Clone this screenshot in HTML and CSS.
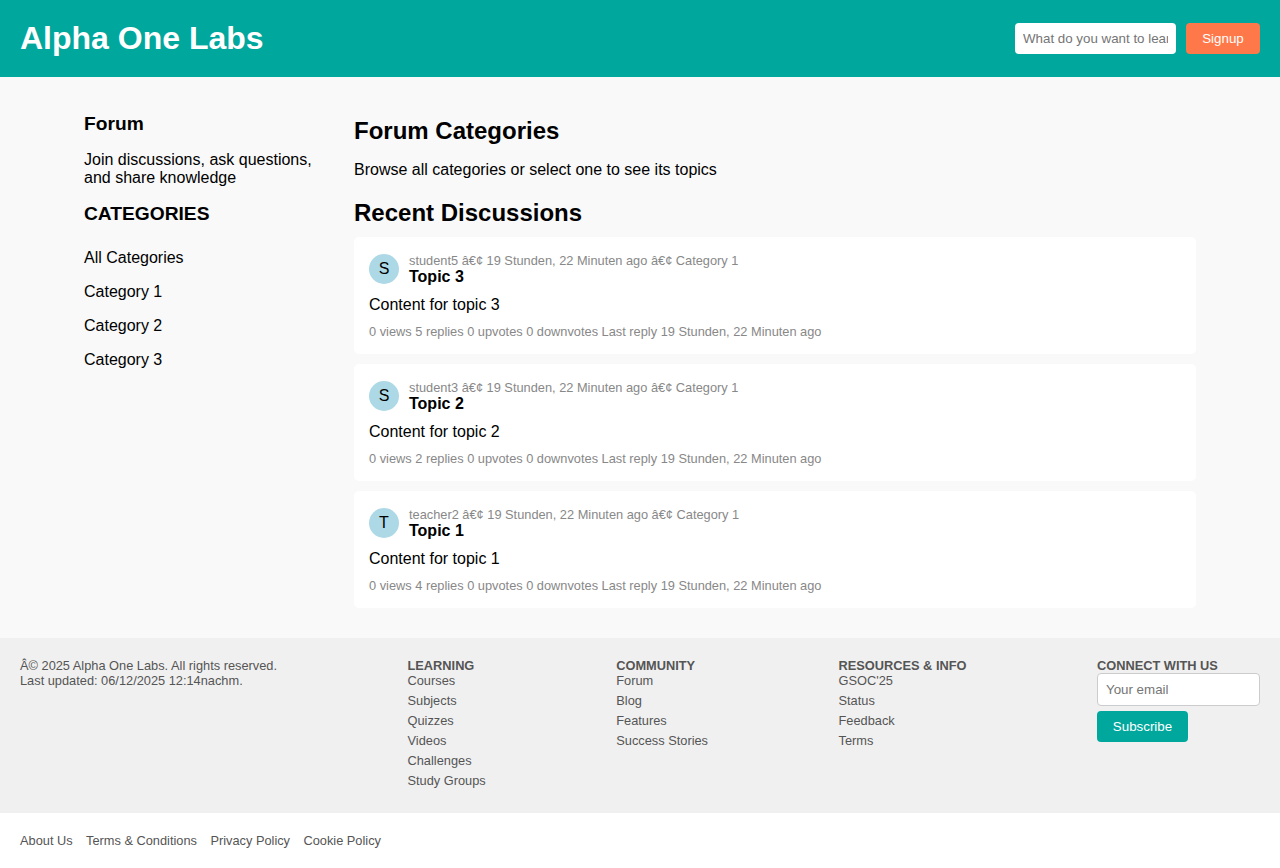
FILE: index.html
```html
<!DOCTYPE html>
<html lang="en">
<head>
<meta charset="utf-8">
<title>Alpha One Labs</title>
<link rel="stylesheet" href="styles.css">
</head>
<body>
<header class="header">
  <h1 class="brand">Alpha One Labs</h1>
  <div class="actions">
    <input class="search" type="text" placeholder="What do you want to learn?">
    <button class="signup">Signup</button>
  </div>
</header>
<main class="main">
  <aside class="sidebar">
    <h3 class="side-title">Forum</h3>
    <p class="side-text">Join discussions, ask questions, and share knowledge</p>
    <h3 class="side-title">CATEGORIES</h3>
    <ul class="cats">
      <li>All Categories</li>
      <li>Category 1</li>
      <li>Category 2</li>
      <li>Category 3</li>
    </ul>
  </aside>
  <section class="content">
    <h2 class="heading">Forum Categories</h2>
    <p class="intro">Browse all categories or select one to see its topics</p>
    <h2 class="heading recent">Recent Discussions</h2>
    <article class="card">
      <div class="card-head"><div class="avatar">S</div><div><div class="meta">student5 â€¢ 19 Stunden, 22 Minuten ago â€¢ Category 1</div><div class="topic">Topic 3</div></div></div>
      <div class="text">Content for topic 3</div>
      <div class="stats">0 views 5 replies 0 upvotes 0 downvotes Last reply 19 Stunden, 22 Minuten ago</div>
    </article>
    <article class="card">
      <div class="card-head"><div class="avatar">S</div><div><div class="meta">student3 â€¢ 19 Stunden, 22 Minuten ago â€¢ Category 1</div><div class="topic">Topic 2</div></div></div>
      <div class="text">Content for topic 2</div>
      <div class="stats">0 views 2 replies 0 upvotes 0 downvotes Last reply 19 Stunden, 22 Minuten ago</div>
    </article>
    <article class="card">
      <div class="card-head"><div class="avatar">T</div><div><div class="meta">teacher2 â€¢ 19 Stunden, 22 Minuten ago â€¢ Category 1</div><div class="topic">Topic 1</div></div></div>
      <div class="text">Content for topic 1</div>
      <div class="stats">0 views 4 replies 0 upvotes 0 downvotes Last reply 19 Stunden, 22 Minuten ago</div>
    </article>
  </section>
</main>
<footer class="footer">
  <div>Â© 2025 Alpha One Labs. All rights reserved.<br>Last updated: 06/12/2025 12:14nachm.</div>
  <div><strong>LEARNING</strong>
    <ul class="links"><li>Courses</li><li>Subjects</li><li>Quizzes</li><li>Videos</li><li>Challenges</li><li>Study Groups</li></ul>
  </div>
  <div><strong>COMMUNITY</strong>
    <ul class="links"><li>Forum</li><li>Blog</li><li>Features</li><li>Success Stories</li></ul>
  </div>
  <div><strong>RESOURCES &amp; INFO</strong>
    <ul class="links"><li>GSOC'25</li><li>Status</li><li>Feedback</li><li>Terms</li></ul>
  </div>
  <div class="connect"><strong>CONNECT WITH US</strong>
    <input class="email" type="email" placeholder="Your email">
    <button class="subscribe">Subscribe</button>
  </div>
</footer>
<nav class="legal"><span>About Us</span><span>Terms &amp; Conditions</span><span>Privacy Policy</span><span>Cookie Policy</span></nav>
</body>
</html>
```
FILE: styles.css
```css
* { box-sizing: border-box; }
body { margin: 0; font-family: "Liberation Sans", Arial, sans-serif; font-size: 16px; color: #000; background: #fff; }
ul { list-style: none; margin: 0; padding: 0; }
.header { height: 77px; padding: 0 20px; background: #00a79d; color: #fff; display: flex; justify-content: space-between; align-items: center; }
.brand { margin: 0; font-size: 32px; }
.actions { display: flex; gap: 10px; }
input, button { font-family: inherit; font-size: 13.333px; border: none; border-radius: 4px; }
.search { width: 161px; height: 31px; padding: 8px; }
.signup { width: 74px; height: 31px; padding: 0; background: #ff7849; color: #fff; }
.main { height: 561px; padding: 20px 84px 0; background: #f9f9f9; display: flex; gap: 20px; }
.sidebar { width: 250px; flex: none; padding-top: 16px; }
.side-title { margin: 0; font-size: 19.2px; line-height: 22px; }
.side-text { margin: 16px 0 16px; line-height: 18px; }
.cats { margin-top: 16px; }
.cats li { padding: 8px 0; line-height: 18px; }
.content { flex: 1; padding-top: 20px; }
.heading { margin: 0; font-size: 24px; line-height: 28px; }
.intro { margin: 16px 0 20px; line-height: 18px; }
.recent { margin-bottom: 10px; }
.card { height: 117px; margin-bottom: 10px; padding: 15px; background: #fff; border-radius: 5px; }
.card-head { display: flex; align-items: center; gap: 10px; height: 34px; margin-bottom: 10px; }
.avatar { width: 30px; height: 30px; line-height: 30px; border-radius: 50%; background: #add8e6; text-align: center; }
.meta, .stats { font-size: 12.8px; line-height: 15px; color: #888; }
.meta { padding-top: 1px; }
.topic { font-weight: bold; line-height: 18px; }
.text { line-height: 18px; margin-bottom: 10px; }
.footer { height: 175px; padding: 20px; background: #f0f0f0; color: #555; display: flex; justify-content: space-between; font-size: 12.8px; line-height: 15px; }
.links li { margin-bottom: 5px; }
.connect { width: 163px; display: flex; flex-direction: column; align-items: flex-start; }
.email { width: 163px; height: 33px; padding: 8px; border: 1px solid #ccc; margin-bottom: 5px; }
.subscribe { width: 91px; height: 31px; padding: 0; background: #00a79d; color: #fff; }
.legal { padding: 20px; display: flex; gap: 13.4px; font-size: 12.8px; line-height: 15px; color: #555; }
```
